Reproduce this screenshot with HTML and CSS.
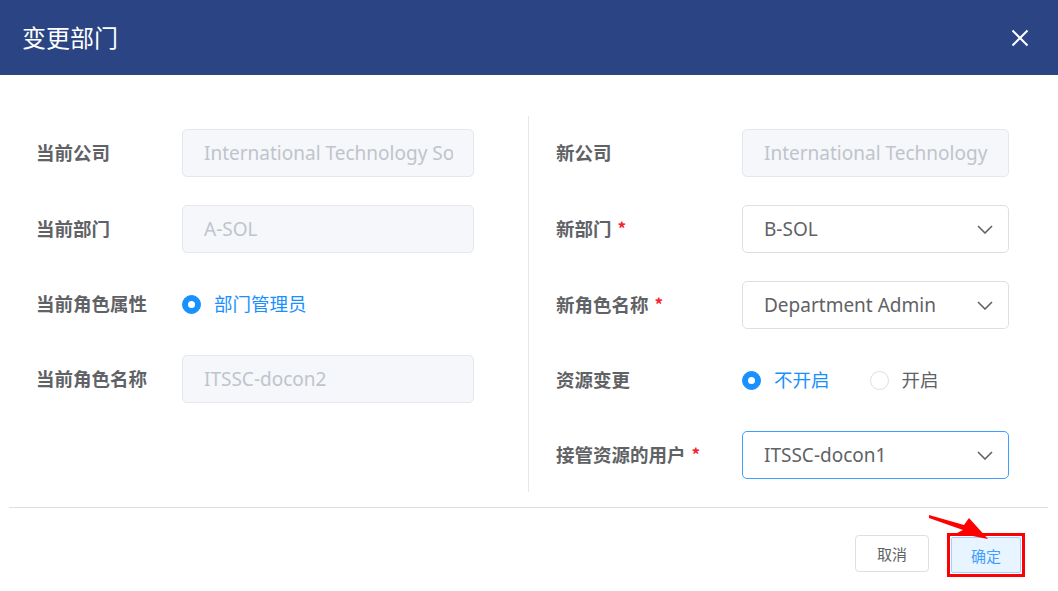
FILE: index.html
```html
<!DOCTYPE html>
<html lang="zh">
<head>
<meta charset="utf-8">
<link rel="stylesheet" href="styles.css">
</head>
<body>
<div class="dialog">
  <div class="header">
    <div class="title">变更部门</div>
    <svg class="close" width="18" height="18" viewBox="0 0 18 18"><path d="M1.5 1.5 L16.5 16.5 M16.5 1.5 L1.5 16.5" stroke="#fff" stroke-width="2" fill="none"/></svg>
  </div>
  <div class="content">
    <div class="col col-left">
      <div class="row"><div class="label">当前公司</div><div class="field input disabled"><span>International Technology Solutions</span></div></div>
      <div class="row"><div class="label">当前部门</div><div class="field input disabled"><span>A-SOL</span></div></div>
      <div class="row row-radio"><div class="label">当前角色属性</div>
        <div class="radios"><div class="radio checked"><span class="dot"></span><span class="rtext">部门管理员</span></div></div>
      </div>
      <div class="row"><div class="label">当前角色名称</div><div class="field input disabled"><span>ITSSC-docon2</span></div></div>
    </div>
    <div class="col col-right">
      <div class="row"><div class="label">新公司</div><div class="field input disabled"><span>International Technology Solutions</span></div></div>
      <div class="row"><div class="label">新部门<i class="req">*</i></div><div class="field input select"><span>B-SOL</span><svg class="chev" width="16" height="9" viewBox="0 0 16 9"><path d="M1 1 L8 8 L15 1" stroke="#606266" stroke-width="1.6" fill="none"/></svg></div></div>
      <div class="row"><div class="label">新角色名称<i class="req">*</i></div><div class="field input select"><span>Department Admin</span><svg class="chev" width="16" height="9" viewBox="0 0 16 9"><path d="M1 1 L8 8 L15 1" stroke="#606266" stroke-width="1.6" fill="none"/></svg></div></div>
      <div class="row row-radio"><div class="label">资源变更</div>
        <div class="radios">
          <div class="radio checked"><span class="dot"></span><span class="rtext">不开启</span></div>
          <div class="radio"><span class="dot"></span><span class="rtext">开启</span></div>
        </div>
      </div>
      <div class="row"><div class="label">接管资源的用户<i class="req">*</i></div><div class="field input select focus"><span>ITSSC-docon1</span><svg class="chev" width="16" height="9" viewBox="0 0 16 9"><path d="M1 1 L8 8 L15 1" stroke="#606266" stroke-width="1.6" fill="none"/></svg></div></div>
    </div>
  </div>
  <div class="footer">
    <button class="btn">取消</button>
    <div class="highlight"><button class="btn primary">确定</button></div>
    <svg class="arrow" width="70" height="35" viewBox="0 0 70 35"><polygon points="4,3 39,13 44,6 63,27 32,21 38,18 4,6" fill="#ff0000"/></svg>
  </div>
</div>
</body>
</html>
```
FILE: styles.css
```css
* { box-sizing: border-box; }
html, body { margin: 0; padding: 0; background: #fff; }
body { font-family: "Noto Sans", "Noto Sans CJK SC", sans-serif; width: 1058px; height: 591px; overflow: hidden; }
.dialog { width: 1058px; height: 591px; display: flex; flex-direction: column; }
.header { height: 75px; background: #2a4484; display: flex; align-items: center; justify-content: space-between; padding: 0 29px 0 22px; flex-shrink: 0; }
.title { color: #fff; font-size: 24px; line-height: 1; font-family: "Noto Sans CJK SC", sans-serif; padding-bottom: 2px; }
.close { display: block; }
.content { display: flex; margin-top: 41px; height: 376px; }
.col { display: flex; flex-direction: column; gap: 28px; padding-top: 13px; }
.col-left { width: 529px; padding-left: 36px; border-right: 1px solid #e4e7ed; }
.col-right { flex: 1; padding-left: 27px; }
.row { display: flex; align-items: center; height: 48px; }
.row-radio { height: 46px; }
.label { font-family: "Noto Sans CJK SC", sans-serif; font-weight: bold; font-size: 18.5px; color: #606266; flex-shrink: 0; display: flex; align-items: center; padding-bottom: 3px; }
.col-left .label { width: 146px; }
.col-right .label { width: 186px; }
.req { font-style: normal; color: #f5222d; margin-left: 6px; font-weight: bold; font-size: 17px; }
.field { height: 48px; border: 1px solid #dcdfe6; border-radius: 5px; display: flex; align-items: center; padding: 0 20px 0 21px; font-size: 19px; color: #606266; overflow: hidden; white-space: nowrap; }
.field span { overflow: hidden; flex: 1; }
.col-left .field { width: 292px; }
.col-right .field { width: 267px; }
.disabled { background: #f5f7fa; border-color: #e4e7ed; color: #c0c4cc; }
.select { padding-right: 15px; }
.focus { border-color: #409eff; }
.chev { flex-shrink: 0; display: block; }
.radios { display: flex; gap: 40px; }
.radio { display: flex; align-items: center; font-size: 18.5px; color: #606266; font-family: "Noto Sans CJK SC", sans-serif; }
.rtext { padding-bottom: 2px; }
.dot { width: 19px; height: 19px; border-radius: 50%; border: 1px solid #dcdfe6; background: #fff; margin-right: 13px; position: relative; }
.radio.checked { color: #1890ff; }
.radio.checked .dot { background: #1890ff; border-color: #1890ff; }
.radio.checked .dot::after { content: ""; position: absolute; left: 50%; top: 50%; width: 7px; height: 7px; margin: -3.5px 0 0 -3.5px; border-radius: 50%; background: #fff; }
.footer { position: relative; margin: 15px 10px 0 9px; border-top: 1px solid #dcdfe6; display: flex; justify-content: flex-end; align-items: flex-start; padding: 25px 23px 0 0; gap: 18px; }
.btn { font-family: "Noto Sans CJK SC", sans-serif; font-size: 15px; height: 37px; width: 74px; border: 1px solid #dcdfe6; border-radius: 4px; background: #fff; color: #606266; margin-top: 2px; padding: 0; }
.highlight { border: 3px solid #ff0000; padding: 1px; }
.btn.primary { margin-top: 0; width: 70px; height: 36px; background: #e8f4ff; border-color: #a3d0fd; color: #409eff; border-radius: 2px; }
.arrow { position: absolute; left: 916px; top: 4px; }
```
